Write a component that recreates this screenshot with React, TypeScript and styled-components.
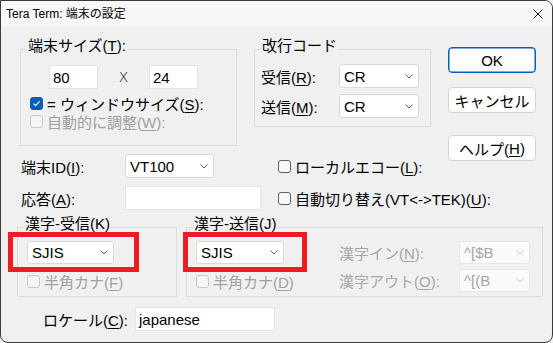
import React from 'react';
import styled, { createGlobalStyle } from 'styled-components';

const GlobalStyle = createGlobalStyle`
  html, body {
    margin: 0;
    padding: 0;
    background: #f0f0f0;
  }
  body {
    font-family: "Liberation Sans", "Noto Sans CJK JP", sans-serif;
    font-size: 15px;
    color: #000;
  }
`;

const Window = styled.div`
  box-sizing: border-box;
  width: 553px;
  height: 343px;
  border: 1px solid #3b3b3b;
  border-radius: 0 8px 8px 8px;
  background: #f0f0f0;
  overflow: hidden;
`;

const TitleBar = styled.div`
  height: 25px;
  display: flex;
  align-items: center;
  justify-content: space-between;
  padding: 0 9px 0 5px;
  background: #f7f7f7;
  font-size: 12px;
  line-height: 14px;
`;

const Content = styled.div`
  padding-top: 11px;
`;

const Top = styled.div`
  display: flex;
`;

const LeftPane = styled.div`
  width: 447px;
  display: flex;
  flex-direction: column;
`;

const Band = styled.div<{ $top: number; $left: number; $gap?: number }>`
  display: flex;
  align-items: flex-start;
  margin-top: ${p => p.$top}px;
  padding-left: ${p => p.$left}px;
  gap: ${p => p.$gap ?? 0}px;
`;

const Group = styled.fieldset<{ $w: number; $h: number }>`
  box-sizing: border-box;
  width: ${p => p.$w}px;
  height: ${p => p.$h}px;
  margin: 0;
  padding: 0 6px;
  border: 1px solid #dcdcdc;
  min-width: 0;
`;

const Legend = styled.legend`
  padding: 0 1px 6px;
  line-height: 18px;
  white-space: nowrap;
`;

const U = styled.span`
  text-decoration: underline;
  text-underline-offset: 2px;
`;

const Row = styled.div<{ $top?: number; $left?: number }>`
  display: flex;
  align-items: center;
  margin-top: ${p => p.$top ?? 0}px;
  margin-left: ${p => p.$left ?? 0}px;
`;

const TextBox = styled.div<{ $w: number }>`
  box-sizing: border-box;
  width: ${p => p.$w}px;
  height: 24px;
  padding-left: 3px;
  display: flex;
  align-items: center;
  background: #fff;
  border: 1px solid #e4e4e4;
  white-space: nowrap;
`;

const Times = styled.span`
  width: 51px;
  text-align: center;
  font-family: "DejaVu Sans", sans-serif;
  font-size: 14px;
  font-weight: 300;
`;

const Combo = styled.div<{ $w: number; $h?: number; $disabled?: boolean }>`
  box-sizing: border-box;
  width: ${p => p.$w}px;
  height: ${p => p.$h ?? 24}px;
  padding: 0 5px 0 4px;
  display: flex;
  align-items: center;
  justify-content: space-between;
  background: ${p => (p.$disabled ? '#fafafa' : '#fff')};
  border: 1px solid ${p => (p.$disabled ? '#e8e8e8' : '#d9d9d9')};
  border-radius: 3px;
  color: ${p => (p.$disabled ? '#a6a6a6' : '#000')};
  white-space: nowrap;
`;

const CheckRow = styled.div<{ $disabled?: boolean; $top?: number; $left?: number }>`
  display: flex;
  align-items: center;
  gap: 4px;
  height: 18px;
  margin-top: ${p => p.$top ?? 0}px;
  margin-left: ${p => p.$left ?? 0}px;
  color: ${p => (p.$disabled ? '#a0a0a0' : '#000')};
  white-space: nowrap;
`;

const Box = styled.span<{ $checked?: boolean; $disabled?: boolean }>`
  box-sizing: border-box;
  flex: none;
  width: 13px;
  height: 13px;
  border-radius: 3px;
  display: flex;
  align-items: center;
  justify-content: center;
  background: ${p => (p.$checked ? '#005fb8' : p.$disabled ? '#f5f5f5' : '#f7f7f7')};
  border: 1px solid ${p => (p.$checked ? '#005fb8' : p.$disabled ? '#c9c9c9' : '#5f5f5f')};
`;

const ButtonColumn = styled.div`
  display: flex;
  flex-direction: column;
  margin-top: 10px;
`;

const Button = styled.div<{ $primary?: boolean; $top: number }>`
  box-sizing: border-box;
  width: 88px;
  height: 26px;
  margin-top: ${p => p.$top}px;
  display: flex;
  align-items: center;
  justify-content: center;
  background: #fdfdfd;
  border: 1px solid ${p => (p.$primary ? '#005fb8' : '#d4d4d4')};
  box-shadow: ${p => (p.$primary ? 'inset 0 0 0 0.5px #005fb8' : 'none')};
  border-radius: 4px;
`;

const FieldGrid = styled.div<{ $cols: string; $top: number; $gap: number; $rows: string }>`
  display: grid;
  grid-template-columns: ${p => p.$cols};
  grid-template-rows: ${p => p.$rows};
  row-gap: ${p => p.$gap}px;
  align-items: center;
  margin-top: ${p => p.$top}px;
`;

const Label = styled.span<{ $disabled?: boolean; $w?: number }>`
  white-space: nowrap;
  width: ${p => (p.$w ? `${p.$w}px` : 'auto')};
  color: ${p => (p.$disabled ? '#a6a6a6' : '#000')};
`;

const CheckCell = styled.div`
  padding-left: 17px;
`;

const Highlight = styled.div`
  position: relative;
  width: fit-content;
  margin-top: 2px;
  margin-left: 3px;
`;

const RedFrame = styled.div<{ $l: number; $r: number }>`
  position: absolute;
  left: ${p => -p.$l}px;
  right: ${p => -p.$r}px;
  top: -9px;
  bottom: -8px;
  border: 5px solid #ed1c24;
  pointer-events: none;
`;

const SendBody = styled.div`
  display: flex;
`;

const SendLeft = styled.div`
  width: 146px;
`;

const Chevron: React.FC<{ disabled?: boolean }> = ({ disabled }) => (
  <svg width="8" height="5" viewBox="0 0 8 5">
    <path d="M0.5 0.5 L4 4 L7.5 0.5" fill="none" stroke={disabled ? '#c4c4c4' : '#5c5c5c'} strokeWidth="1" />
  </svg>
);

const Check: React.FC<{ checked?: boolean; disabled?: boolean }> = ({ checked, disabled }) => (
  <Box $checked={checked} $disabled={disabled}>
    {checked && (
      <svg width="9" height="9" viewBox="0 0 9 9">
        <path d="M1.5 4.6 L3.6 6.6 L7.6 2.4" fill="none" stroke="#fff" strokeWidth="1.2" />
      </svg>
    )}
  </Box>
);

const Select: React.FC<{ value: string; w: number; h?: number; disabled?: boolean }> = ({ value, w, h, disabled }) => (
  <Combo $w={w} $h={h} $disabled={disabled}>
    <span>{value}</span>
    <Chevron disabled={disabled} />
  </Combo>
);

const App: React.FC = () => {
  return (
    <>
      <GlobalStyle />
      <Window>
        <TitleBar>
          <span>Tera Term: 端末の設定</span>
          <svg width="10" height="10" viewBox="0 0 10 10">
            <path d="M0.5 0.5 L9.5 9.5 M9.5 0.5 L0.5 9.5" stroke="#1b1b1b" strokeWidth="1" />
          </svg>
        </TitleBar>
        <Content>
          <Top>
            <LeftPane>
              <Band $top={0} $left={19} $gap={17}>
                <Group $w={217} $h={109}>
                  <Legend>端末サイズ(<U>T</U>):</Legend>
                  <Row $top={4} $left={22}>
                    <TextBox $w={49}>80</TextBox>
                    <Times>X</Times>
                    <TextBox $w={49}>24</TextBox>
                  </Row>
                  <CheckRow $top={5} $left={3}>
                    <Check checked />
                    <span>= ウィンドウサイズ(<U>S</U>):</span>
                  </CheckRow>
                  <CheckRow $disabled $left={3}>
                    <Check disabled />
                    <span>自動的に調整(<U>W</U>):</span>
                  </CheckRow>
                </Group>
                <Group $w={177} $h={90}>
                  <Legend>改行コード</Legend>
                  <FieldGrid $cols="78px 80px" $rows="24px 24px" $gap={6} $top={3}>
                    <Label>受信(<U>R</U>):</Label>
                    <Select value="CR" w={80} />
                    <Label>送信(<U>M</U>):</Label>
                    <Select value="CR" w={80} />
                  </FieldGrid>
                </Group>
              </Band>
              <Band $top={8} $left={20}>
                <FieldGrid $cols="104px 136px auto" $rows="24px 24px" $gap={8} $top={0}>
                  <Label>端末ID(<U>I</U>):</Label>
                  <Select value="VT100" w={89} />
                  <CheckCell>
                    <CheckRow>
                      <Check />
                      <span>ローカルエコー(<U>L</U>):</span>
                    </CheckRow>
                  </CheckCell>
                  <Label>応答(<U>A</U>):</Label>
                  <TextBox $w={136} />
                  <CheckCell>
                    <CheckRow>
                      <Check />
                      <span>自動切り替え(VT&lt;-&gt;TEK)(<U>U</U>):</span>
                    </CheckRow>
                  </CheckCell>
                </FieldGrid>
              </Band>
            </LeftPane>
            <ButtonColumn>
              <Button $primary $top={0}>OK</Button>
              <Button $top={14}>キャンセル</Button>
              <Button $top={22}>ヘルプ(<U>H</U>)</Button>
            </ButtonColumn>
          </Top>
          <Band $top={5} $left={16} $gap={9}>
            <Group $w={160} $h={82}>
              <Legend>漢字-受信(K)</Legend>
              <Highlight>
                <Select value="SJIS" w={87} h={23} />
                <RedFrame $l={19} $r={25} />
              </Highlight>
              <CheckRow $disabled $top={8} $left={3}>
                <Check disabled />
                <span>半角カナ(<U>F</U>)</span>
              </CheckRow>
            </Group>
            <Group $w={357} $h={82}>
              <Legend>漢字-送信(J)</Legend>
              <SendBody>
                <SendLeft>
                  <Highlight>
                    <Select value="SJIS" w={88} h={23} />
                    <RedFrame $l={13} $r={23} />
                  </Highlight>
                  <CheckRow $disabled $top={8} $left={3}>
                    <Check disabled />
                    <span>半角カナ(<U>D</U>)</span>
                  </CheckRow>
                </SendLeft>
                <FieldGrid $cols="120px 71px" $rows="23px 23px" $gap={5} $top={2}>
                  <Label $disabled>漢字イン(<U>N</U>):</Label>
                  <Select value="^[$B" w={71} h={23} disabled />
                  <Label $disabled>漢字アウト(<U>O</U>):</Label>
                  <Select value="^[(B" w={71} h={23} disabled />
                </FieldGrid>
              </SendBody>
            </Group>
          </Band>
          <Band $top={10} $left={42}>
            <Row>
              <Label $w={92}>ロケール(<U>C</U>):</Label>
              <TextBox $w={140}>japanese</TextBox>
            </Row>
          </Band>
        </Content>
      </Window>
    </>
  );
};

export default App;
